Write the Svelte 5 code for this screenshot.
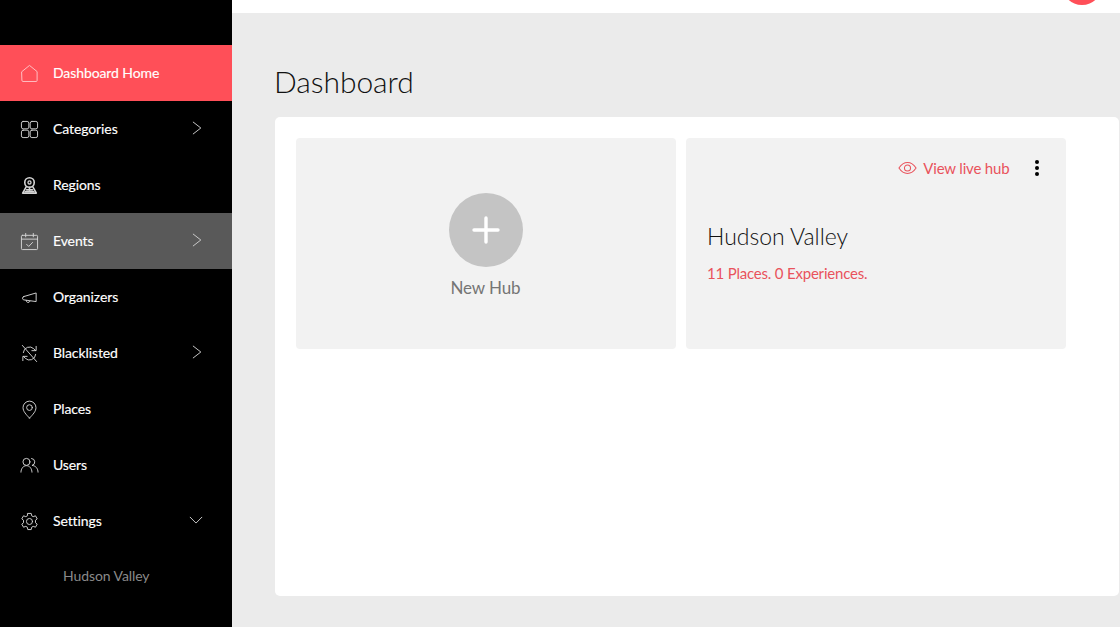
<script>
  const menu = [
    { label: "Dashboard Home", icon: "home", active: true },
    { label: "Categories", icon: "grid", arrow: "right" },
    { label: "Regions", icon: "region" },
    { label: "Events", icon: "calendar", arrow: "right", hover: true },
    { label: "Organizers", icon: "horn" },
    { label: "Blacklisted", icon: "blocked", arrow: "right" },
    { label: "Places", icon: "pin" },
    { label: "Users", icon: "users" },
    { label: "Settings", icon: "gear", arrow: "down" }
  ];
</script>

<div class="page">
  <aside class="sidebar">
    <ul>
      {#each menu as item}
        <li class="item" class:active={item.active} class:hover={item.hover}>
          <svg class="icon" viewBox="0 0 20 20" fill="none" stroke="currentColor" stroke-width="1" stroke-linejoin="round" stroke-linecap="round">
            {#if item.icon === "home"}
              <path d="M2 8 10 1.500l8 6.500v9.400a1 1 0 0 1-1 1H3a1 1 0 0 1-1-1z" />
            {:else if item.icon === "grid"}
              <rect x="1.500" y="1.500" width="7.800" height="7.800" rx="1.800" />
              <rect x="10.700" y="1.500" width="7.800" height="7.800" rx="1.800" />
              <rect x="1.500" y="10.700" width="7.800" height="7.800" rx="1.800" />
              <rect x="10.700" y="10.700" width="7.800" height="7.800" rx="1.800" />
            {:else if item.icon === "region"}
              <circle cx="10" cy="6.800" r="5" stroke-width="1.700" />
              <circle cx="10" cy="6.800" r="1.600" stroke-width="1.400" />
              <path d="M10 12v3M6.500 11.500 2.800 18h14.400l-3.700-6.500" stroke-width="1.700" />
              <path d="M7 14.500h6M5.500 16.500h9" stroke-width="1.700" />
            {:else if item.icon === "calendar"}
              <rect x="1.500" y="3.500" width="17" height="15" rx="1" />
              <path d="M1.500 7.500h17M6 1.500v3.600M14 1.500v3.600M7 13l2.200 2.200L13.200 11" />
            {:else if item.icon === "horn"}
              <path d="M4 9 17 5.200v9.100L4 12.500a1.800 1.800 0 0 1 0-3.500z" />
              <path d="M6.500 13a2.100 2.100 0 0 0 4 1" />
            {:else if item.icon === "blocked"}
              <path d="M2.500 1.500 17.500 18.500" />
              <path d="M3.500 9a6.500 6.500 0 0 1 11-4l2 2M17 2.500V7h-4.500M16.500 11a6.500 6.500 0 0 1-11 4l-2-2M3 17.500V13h4.500" />
            {:else if item.icon === "pin"}
              <path d="M10 19C6.300 15.200 3.200 11.900 3.200 8a6.800 6.800 0 0 1 13.600 0c0 3.900-3.100 7.200-6.800 11z" />
              <circle cx="10" cy="8" r="3" />
            {:else if item.icon === "users"}
              <circle cx="6.800" cy="6.200" r="3.700" />
              <path d="M1 17c0-3.800 2.500-6.800 5.800-6.800s5.800 3 5.800 6.800" />
              <path d="M12.200 2.600a3.700 3.700 0 0 1 .4 7.300c3.800.3 6.400 3.100 6.400 7.100" />
            {:else if item.icon === "gear"}
              <circle cx="10" cy="10" r="3.200" />
              <path d="M8.200 1.500h3.600l.5 2.500 1.600.9 2.400-.9 1.800 3.200-1.800 1.500v2.600l1.800 1.500-1.800 3.200-2.400-.9-1.600.9-.5 2.500H8.200l-.5-2.500-1.600-.9-2.400.9-1.800-3.200 1.800-1.500V8.700L1.900 7.200l1.800-3.200 2.400.9 1.600-.9z" />
            {/if}
          </svg>
          <span class="label">{item.label}</span>
          {#if item.arrow === "right"}
            <svg class="arrow" viewBox="0 0 16 16" fill="none" stroke="currentColor" stroke-width="1.100"><path d="M4.500 1 13.500 8l-9 7" /></svg>
          {:else if item.arrow === "down"}
            <svg class="arrow" viewBox="0 0 16 16" fill="none" stroke="currentColor" stroke-width="1.100"><path d="M1 4.500 8 11.500l7-7" /></svg>
          {/if}
        </li>
      {/each}
    </ul>
    <div class="sub">Hudson Valley</div>
  </aside>

  <main>
    <header class="topbar"><span class="avatar"></span></header>
    <div class="content">
      <h1>Dashboard</h1>
      <section class="panel">
        <div class="hub new">
          <span class="plus">
            <svg viewBox="0 0 28 28" width="28" height="28" fill="none" stroke="#fff" stroke-width="3.400" stroke-linecap="round"><path d="M14 2v24M2 14h24" /></svg>
          </span>
          <span class="new-label">New Hub</span>
        </div>
        <div class="hub">
          <div class="hub-top">
            <svg class="eye" viewBox="0 0 20 14" fill="none" stroke="currentColor" stroke-width="1.100"><path d="M1 7c2.500-3.800 5.500-5.700 9-5.700s6.500 1.900 9 5.700c-2.500 3.800-5.500 5.700-9 5.700S3.500 10.800 1 7z" /><circle cx="10" cy="7" r="3.200" /></svg>
            <span class="live">View live hub</span>
            <span class="dots"><i></i><i></i><i></i></span>
          </div>
          <h2>Hudson Valley</h2>
          <p>11 Places. 0 Experiences.</p>
        </div>
      </section>
    </div>
  </main>
</div>

<style>
  :global(body) {
    margin: 0;
    font-family: Lato, "Open Sans", sans-serif;
  }

  .page {
    display: flex;
    width: 1120px;
    height: 627px;
    overflow: hidden;
    background: #ebebeb;
  }

  .sidebar {
    flex: 0 0 232px;
    padding-top: 45px;
    box-sizing: border-box;
    background: #000;
    color: #fff;
  }

  ul {
    margin: 0;
    padding: 0;
    list-style: none;
  }

  .item {
    display: flex;
    align-items: center;
    height: 56px;
    padding-left: 20px;
    box-sizing: border-box;
    font-size: 14px;
    letter-spacing: -0.1px;
    -webkit-text-stroke: 0.15px currentColor;
  }

  .item.active {
    background: #ff4f58;
  }

  .item.hover {
    background: #595959;
  }

  .icon {
    flex: none;
    width: 19px;
    height: 19px;
    margin-right: 14px;
    color: #d4d4d4;
  }

  .active .icon {
    color: #ffc4c7;
  }

  .label {
    flex: 1;
    margin-top: -2px;
    color: #fff;
  }

  .arrow {
    flex: none;
    width: 14px;
    height: 14px;
    margin: -3px 29px 0 0;
    color: #ccc;
  }

  .sub {
    margin-top: 18px;
    padding-left: 63px;
    font-size: 14px;
    letter-spacing: -0.08px;
    line-height: 17px;
    color: #8a8a8a;
  }

  main {
    flex: 1;
    display: flex;
    flex-direction: column;
    min-width: 0;
  }

  .topbar {
    display: flex;
    justify-content: flex-end;
    flex: 0 0 13px;
    overflow: hidden;
    background: #fff;
  }

  .avatar {
    flex: none;
    width: 40px;
    height: 40px;
    margin: -35.500px 18px 0 0;
    border-radius: 50%;
    background: #ff4f58;
  }

  .content {
    flex: 1;
    display: flex;
    flex-direction: column;
    padding: 0 0 31px 43px;
  }

  h1 {
    margin: 50px 0 17px -1px;
    font-size: 30px;
    letter-spacing: -0.05px;
    line-height: 37px;
    font-weight: 300;
    color: #111;
  }

  .panel {
    flex: 1;
    display: flex;
    align-items: flex-start;
    gap: 10.500px;
    padding: 21px 21px 21px 20.500px;
    border-radius: 5px;
    margin-right: 1px;
    background: #fff;
  }

  .hub {
    box-sizing: border-box;
    width: 380px;
    height: 211px;
    border-radius: 4px;
    background: #f2f2f2;
  }

  .new {
    display: flex;
    flex-direction: column;
    align-items: center;
    padding-top: 55px;
  }

  .plus {
    display: flex;
    align-items: center;
    justify-content: center;
    width: 74px;
    height: 74px;
    border-radius: 50%;
    background: #c4c4c4;
  }

  .new-label {
    margin-top: 10px;
    font-size: 17px;
    letter-spacing: -0.1px;
    line-height: 22px;
    color: #757575;
  }

  .hub-top {
    display: flex;
    align-items: center;
    justify-content: flex-end;
    height: 20px;
    margin-top: 20px;
    padding-right: 27px;
    color: #e9535c;
  }

  .eye {
    width: 19px;
    height: 14px;
    margin-right: 6px;
  }

  .live {
    font-size: 15px;
    letter-spacing: -0.17px;
    line-height: 20px;
    margin-top: -1px;
  }

  .dots {
    display: flex;
    flex-direction: column;
    gap: 2px;
    margin-left: 25.500px;
  }

  .dots i {
    display: block;
    width: 4px;
    height: 4px;
    border-radius: 50%;
    background: #000;
  }

  h2 {
    margin: 43px 0 0 21px;
    font-size: 23px;
    line-height: 30px;
    font-weight: 300;
    letter-spacing: -0.02px;
    color: #111;
  }

  p {
    margin: 12px 0 0 21px;
    font-size: 15px;
    letter-spacing: -0.2px;
    line-height: 20px;
    color: #e9535c;
  }
</style>
